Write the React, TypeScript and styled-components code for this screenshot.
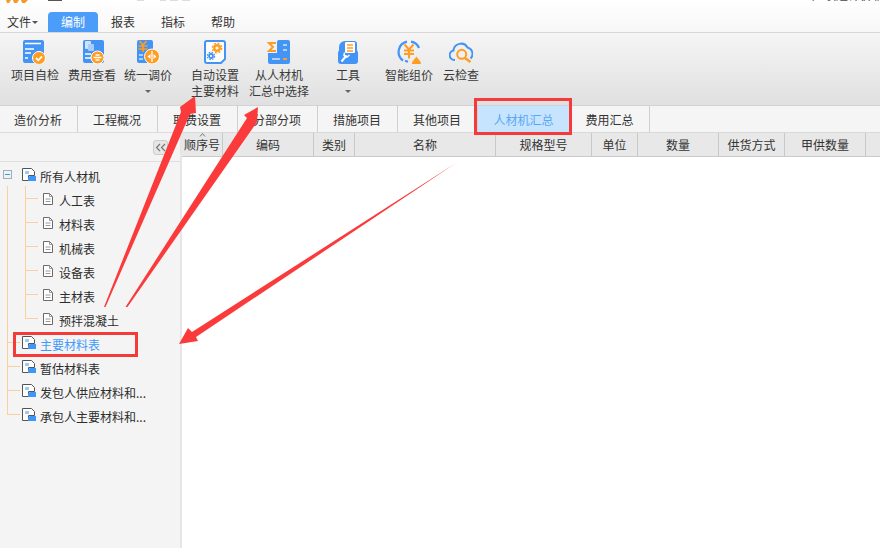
import { type FC, type ReactNode } from 'react';
import styled, { createGlobalStyle } from 'styled-components';

const GlobalStyle = createGlobalStyle`
  html, body {
    margin: 0;
    padding: 0;
    background: #fff;
  }
  body {
    font-family: "Noto Sans CJK SC", "Liberation Sans", sans-serif;
    font-size: 12px;
    color: #333;
  }
`;

const Page = styled.div`
  position: relative;
  width: 880px;
  height: 548px;
  overflow: hidden;
  display: flex;
  flex-direction: column;
`;

const TopBar = styled.div`
  height: 32px;
  flex: none;
  display: flex;
  flex-direction: column;
  background: linear-gradient(#fff, #f7f7f7);
  border-bottom: 1px solid #d6d6d6;
`;

const TitleStrip = styled.div`
  height: 12px;
  flex: none;
  display: flex;
  align-items: flex-start;
  overflow: hidden;
`;

const TitleText = styled.span`
  margin: -14px 0 0 auto;
  width: 68px;
  white-space: nowrap;
  overflow: hidden;
  line-height: 18px;
  color: #444;
`;

const Menu = styled.div`
  display: flex;
  height: 20px;
`;

const MenuItem = styled.div<{ $active?: boolean; $first?: boolean }>`
  width: ${({ $first }) => ($first ? '48px' : '50px')};
  padding-left: ${({ $first }) => ($first ? '7px' : '0')};
  box-sizing: border-box;
  display: flex;
  align-items: center;
  justify-content: ${({ $first }) => ($first ? 'flex-start' : 'center')};
  line-height: 20px;
  border-radius: 4px 4px 0 0;
  color: ${({ $active }) => ($active ? '#fff' : '#333')};
  background: ${({ $active }) => ($active ? '#4b9df9' : 'transparent')};
`;

const Caret = styled.span`
  display: inline-block;
  margin-left: 1px;
  margin-top: 1px;
  border-left: 3px solid transparent;
  border-right: 3px solid transparent;
  border-top: 3px solid #555;
`;

const Ribbon = styled.div`
  height: 72px;
  flex: none;
  display: flex;
  padding-left: 7px;
  background: linear-gradient(#f5f5f5, #e0e0e0);
  border-bottom: 1px solid #d2d2d2;
`;

const RibbonItem = styled.div<{ $width: number }>`
  width: ${({ $width }) => $width}px;
  flex: none;
  display: flex;
  flex-direction: column;
  align-items: center;
  padding-top: 7px;
  line-height: 16px;
  white-space: nowrap;
  color: #3a3a3a;
`;

const RibbonLabel = styled.span`
  margin-top: 3px;
  display: flex;
  flex-direction: column;
  align-items: center;
`;

const RibbonCaret = styled.span`
  margin-top: 7px;
  border-left: 3px solid transparent;
  border-right: 3px solid transparent;
  border-top: 3px solid #666;
`;

const TabBar = styled.div`
  height: 26px;
  flex: none;
  display: flex;
  background: #f5f5f5;
  border-bottom: 1px solid #dcdcdc;
`;

const Tab = styled.div<{ $width: number; $active?: boolean }>`
  width: ${({ $width }) => $width}px;
  flex: none;
  box-sizing: border-box;
  display: flex;
  align-items: center;
  justify-content: center;
  padding-right: 1px;
  border-right: 1px solid #cfcfcf;
  color: ${({ $active }) => ($active ? '#5aa8f5' : '#333')};
  background: ${({ $active }) => ($active ? '#c6e4fd' : 'transparent')};
`;

const Workspace = styled.div`
  flex: 1;
  display: flex;
  min-height: 0;
`;

const Sidebar = styled.div`
  width: 180px;
  flex: none;
  background: #f4f4f4;
  border-right: 2px solid #e6e6e6;
`;

const SidebarHead = styled.div`
  height: 29px;
  box-sizing: border-box;
  display: flex;
  align-items: flex-start;
  justify-content: flex-end;
  padding: 7px 12px 0 0;
  border-bottom: 1px solid #dedede;
`;

const CollapseButton = styled.div`
  width: 15px;
  height: 15px;
  box-sizing: border-box;
  display: flex;
  align-items: center;
  justify-content: center;
  border: 1px solid #cdcdcd;
  border-radius: 3px;
  background: #e6e6e6;
`;

const TreeRoot = styled.div`
  position: relative;
  padding-top: 2px;
  &::before {
    content: '';
    position: absolute;
    left: 7px;
    top: 24px;
    height: 229px;
    border-left: 1px solid #f9d19b;
  }
`;

const LeafGroup = styled.div`
  position: relative;
  &::before {
    content: '';
    position: absolute;
    left: 25px;
    top: -2px;
    bottom: 14px;
    border-left: 1px solid #f9d19b;
  }
`;

const TreeRow = styled.div<{ $leaf?: boolean; $selected?: boolean; $connector?: boolean }>`
  position: relative;
  height: 24px;
  display: flex;
  align-items: center;
  gap: ${({ $leaf }) => ($leaf ? '6px' : '4px')};
  padding-left: ${({ $leaf }) => ($leaf ? '43px' : '22px')};
  white-space: nowrap;
  color: ${({ $selected }) => ($selected ? '#3f9bfa' : '#2c2c2c')};
  &::before {
    content: '';
    display: ${({ $connector }) => ($connector ? 'block' : 'none')};
    position: absolute;
    left: ${({ $leaf }) => ($leaf ? '25px' : '7px')};
    top: 10px;
    width: 13px;
    border-top: 1px solid #f9d19b;
  }
`;

const Expander = styled.span`
  position: absolute;
  left: 3px;
  top: 6px;
  width: 9px;
  height: 9px;
  box-sizing: border-box;
  border: 1px solid #9fb0bd;
  background: #eef2f5;
  display: flex;
  align-items: center;
  justify-content: center;
  &::after {
    content: '';
    width: 5px;
    border-top: 1px solid #3f9bc8;
  }
`;

const TreeIcon = styled.svg`
  flex: none;
  margin-top: -3px;
`;

const Main = styled.div`
  flex: 1;
  min-width: 0;
  background: #fff;
`;

const GridHead = styled.div`
  height: 23px;
  display: flex;
  background: #e8e8e8;
  border-top: 1px solid #d9d9d9;
  margin-top: -1px;
  border-bottom: 1px solid #cacaca;
`;

const GridCell = styled.div<{ $width: number; $open?: boolean }>`
  position: relative;
  width: ${({ $width }) => $width}px;
  flex: none;
  box-sizing: border-box;
  display: flex;
  align-items: center;
  justify-content: center;
  border-right: ${({ $open }) => ($open ? 'none' : '1px solid #c8c8c8')};
  color: #333;
  white-space: nowrap;
`;

const SortMark = styled.svg`
  position: absolute;
  left: 17px;
  top: 0;
`;

const Annotations = styled.svg`
  position: absolute;
  inset: 0;
  pointer-events: none;
`;

const BLUE = '#4394f5';
const ORANGE = '#ff9d22';

const IconSvg: FC<{ children: ReactNode }> = ({ children }) => (
  <svg width="24" height="24" viewBox="0 0 24 24">{children}</svg>
);

const CheckIcon = () => (
  <IconSvg>
    <rect x="0" y="0" width="21" height="23" rx="2" fill={BLUE} />
    <path d="M2 3.500h16M2 9h9M2 13h6M2 18h3" stroke="#fff" strokeWidth="1.500" />
    <circle cx="16" cy="18" r="6.500" fill={ORANGE} stroke="#fff" />
    <path d="M13 18l2.300 2.300 3.700-4" stroke="#fff" strokeWidth="1.800" fill="none" />
  </IconSvg>
);

const CostIcon = () => (
  <IconSvg>
    <rect x="3" y="0" width="21" height="23" rx="2" fill={BLUE} />
    <rect x="5" y="1" width="6" height="8" rx="1" fill="#cfe3fb" />
    <rect x="8" y="4" width="6" height="7" rx="1" fill="#a7cdf8" />
    <path d="M5 14h6M5 18h6" stroke="#fff" strokeWidth="1.500" />
    <circle cx="17.500" cy="17.500" r="6.500" fill={ORANGE} stroke="#fff" />
    <path d="M13.500 17.500h8M15.500 15h4M15.500 20h4" stroke="#fff" strokeWidth="1.300" />
  </IconSvg>
);

const PriceIcon = () => (
  <IconSvg>
    <rect x="1" y="0" width="16" height="23" rx="2" fill={BLUE} />
    <path d="M3.500 1l3.500 4 3.500-4M2.500 6h9M2.500 9h9M7 5v7" stroke={ORANGE} strokeWidth="1.700" fill="none" />
    <path d="M3 15h4M3 19h4" stroke="#cfe3fb" strokeWidth="1.500" />
    <circle cx="16" cy="16.500" r="7.500" fill={ORANGE} stroke="#fff" />
    <path d="M16 11v11" stroke="#fff" strokeWidth="1.300" />
    <path d="M14.500 14l-3 2.500 3 2.500zM17.500 14l3 2.500-3 2.500z" fill="#fff" />
  </IconSvg>
);

const GearIcon = () => (
  <IconSvg>
    <path d="M4 1h16a2 2 0 0 1 2 2v16l-4 4H4a2 2 0 0 1-2-2V3a2 2 0 0 1 2-2z" fill="#fff" stroke={BLUE} strokeWidth="2" />
    <circle cx="14" cy="8" r="2.800" fill="none" stroke={ORANGE} strokeWidth="2.400" />
    <circle cx="14" cy="8" r="4.800" fill="none" stroke={ORANGE} strokeWidth="1.300" strokeDasharray="2 1.770" />
    <circle cx="8" cy="16" r="2" fill="none" stroke={BLUE} strokeWidth="1.800" />
    <circle cx="8" cy="16" r="3.700" fill="none" stroke={BLUE} strokeWidth="1.100" strokeDasharray="1.700 1.200" />
  </IconSvg>
);

const SumIcon = () => (
  <IconSvg>
    <path d="M10 2a2 2 0 0 1 2-2h9a2 2 0 0 1 2 2v20a2 2 0 0 1-2 2H3a2 2 0 0 1-2-2v-9h9z" fill={BLUE} />
    <path d="M9 3H2l4 4-4 4h7" stroke={ORANGE} strokeWidth="2" fill="none" />
    <path d="M16 5h4M16 10h4" stroke="#cfe3fb" strokeWidth="1.500" />
    <path d="M5 19h8" stroke="#cfe3fb" strokeWidth="1.500" />
    <path d="M16 19h4" stroke={ORANGE} strokeWidth="2" />
  </IconSvg>
);

const ToolIcon = () => (
  <IconSvg>
    <rect x="2" y="10" width="20" height="14" rx="3" fill={BLUE} />
    <path d="M3 14V7a6 6 0 0 1 6-6h9a3 3 0 0 1 3 3v8H9z" fill={BLUE} />
    <rect x="9" y="2" width="10" height="11" rx="1" fill="#fff" />
    <path d="M11 5h6M11 8h6M11 11h6" stroke={ORANGE} strokeWidth="1.400" />
    <path d="M5.500 21.500l5-6" stroke="#fff" strokeWidth="2" fill="none" />
    <path d="M8.500 12.500l-.5 3 3 1.500 2.500-2" stroke="#fff" strokeWidth="1.500" fill="none" />
  </IconSvg>
);

const SmartPriceIcon = () => (
  <IconSvg>
    <path d="M6 20.500A10.500 10.500 0 0 1 10 1.700" fill="none" stroke={BLUE} strokeWidth="2.200" />
    <path d="M14 1.700a10.500 10.500 0 0 1 8 6.300" fill="none" stroke={BLUE} strokeWidth="2.200" />
    <path d="M8 20.800l3 1" fill="none" stroke={BLUE} strokeWidth="2.200" />
    <path d="M7.500 4.500l4.500 5 4.500-5M7 10.500h10M7 14h10M12 9.500v9" stroke={ORANGE} strokeWidth="2" fill="none" />
    <path d="M15 24c0-3 2-4 4.500-7.500 2 3.500 4.500 4.500 4.500 7.500z" fill={ORANGE} />
  </IconSvg>
);

const CloudIcon = () => (
  <IconSvg>
    <path d="M6 20H5.500a4.800 4.800 0 0 1-1-9.500A7.500 7.500 0 0 1 18.500 7.500a6.500 6.500 0 0 1 3 11" fill="none" stroke={BLUE} strokeWidth="2" />
    <circle cx="12.700" cy="14.300" r="4.500" fill="#f0f0f0" stroke={ORANGE} strokeWidth="2" />
    <path d="M16 18l5.500 4" stroke={ORANGE} strokeWidth="2.500" />
  </IconSvg>
);

const FolderIcon = () => (
  <TreeIcon width="14" height="14" viewBox="0 0 14 14">
    <path d="M.5.500h9l3 3v4H6.500v5h-6z" fill="#fff" stroke="#555" />
    <rect x="3" y="3" width="4" height="3" fill="#9ccafb" />
    <path d="M6 13V9.500L8 8h6v5z" fill="#3f96f8" />
  </TreeIcon>
);

const DocIcon = () => (
  <TreeIcon width="10" height="12" viewBox="0 0 10 12">
    <path d="M6.500.5H.5v11h9V3.500z" fill="#fff" stroke="#6b6b6b" />
    <path d="M6.500.5v3h3M2.500 6h5M2.500 8.500h5" fill="none" stroke="#9a9a9a" />
  </TreeIcon>
);

const ribbonItems: { width: number; icon: FC; label: string[]; caret?: boolean }[] = [
  { width: 56, icon: CheckIcon, label: ['项目自检'] },
  { width: 58, icon: CostIcon, label: ['费用查看'] },
  { width: 54, icon: PriceIcon, label: ['统一调价'], caret: true },
  { width: 80, icon: GearIcon, label: ['自动设置', '主要材料'] },
  { width: 48, icon: SumIcon, label: ['从人材机', '汇总中选择'] },
  { width: 90, icon: ToolIcon, label: ['工具'], caret: true },
  { width: 32, icon: SmartPriceIcon, label: ['智能组价'] },
  { width: 72, icon: CloudIcon, label: ['云检查'] },
];

const tabs = [
  { label: '造价分析', width: 78 },
  { label: '工程概况', width: 80 },
  { label: '取费设置', width: 80 },
  { label: '分部分项', width: 80 },
  { label: '措施项目', width: 80 },
  { label: '其他项目', width: 80 },
  { label: '人材机汇总', width: 93, active: true },
  { label: '费用汇总', width: 79 },
];

const columns = [
  { label: '顺序号', width: 41 },
  { label: '编码', width: 91 },
  { label: '类别', width: 41 },
  { label: '名称', width: 141 },
  { label: '规格型号', width: 96 },
  { label: '单位', width: 46 },
  { label: '数量', width: 81 },
  { label: '供货方式', width: 66 },
  { label: '甲供数量', width: 81 },
  { label: '', width: 14 },
];

const leaves = ['人工表', '材料表', '机械表', '设备表', '主材表', '预拌混凝土'];
const tables = ['主要材料表', '暂估材料表', '发包人供应材料和...', '承包人主要材料和...'];

const App: FC = () => (
  <>
    <GlobalStyle />
    <Page>
      <TopBar>
        <TitleStrip>
          <svg width="240" height="4" viewBox="0 0 240 4">
            <path d="M6 0h5l-2 3H7zM13 0h6l-2 3h-3zM21 0h7l-3 3h-3z" fill="#f59a23" />
            <path d="M48 .5h14" stroke="#555" />
            <path d="M137 .5h7M160 .5h6M170 .5h8M182 .5h8" stroke="#ddd" />
          </svg>
          <TitleText>广联达计价软件</TitleText>
        </TitleStrip>
        <Menu>
          <MenuItem $first>文件<Caret /></MenuItem>
          <MenuItem $active>编制</MenuItem>
          <MenuItem>报表</MenuItem>
          <MenuItem>指标</MenuItem>
          <MenuItem>帮助</MenuItem>
        </Menu>
      </TopBar>

      <Ribbon>
        {ribbonItems.map(({ width, icon: Icon, label, caret }) => (
          <RibbonItem key={label[0]} $width={width}>
            <Icon />
            <RibbonLabel>
              {label.map((line) => <span key={line}>{line}</span>)}
            </RibbonLabel>
            {caret && <RibbonCaret />}
          </RibbonItem>
        ))}
      </Ribbon>

      <TabBar>
        {tabs.map((tab) => (
          <Tab key={tab.label} $width={tab.width} $active={tab.active}>{tab.label}</Tab>
        ))}
      </TabBar>

      <Workspace>
        <Sidebar>
          <SidebarHead>
            <CollapseButton>
              <svg width="11" height="9" viewBox="0 0 11 9">
                <path d="M5 1L1.500 4.500 5 8M10 1L6.500 4.500 10 8" fill="none" stroke="#777" strokeWidth="1.200" />
              </svg>
            </CollapseButton>
          </SidebarHead>
          <TreeRoot>
            <TreeRow>
              <Expander />
              <FolderIcon />
              所有人材机
            </TreeRow>
            <LeafGroup>
              {leaves.map((leaf) => (
                <TreeRow key={leaf} $leaf $connector>
                  <DocIcon />
                  {leaf}
                </TreeRow>
              ))}
            </LeafGroup>
            {tables.map((table, i) => (
              <TreeRow key={table} $connector $selected={i === 0}>
                <FolderIcon />
                {table}
              </TreeRow>
            ))}
          </TreeRoot>
        </Sidebar>

        <Main>
          <GridHead>
            {columns.map((col, i) => (
              <GridCell key={col.label || i} $width={col.width} $open={!col.label}>
                {i === 0 && (
                  <SortMark width="7" height="4" viewBox="0 0 7 4">
                    <path d="M1 3.500l2.500-3 2.500 3" fill="none" stroke="#777" />
                  </SortMark>
                )}
                {col.label}
              </GridCell>
            ))}
          </GridHead>
        </Main>
      </Workspace>

      <Annotations width="880" height="548" viewBox="0 0 880 548">
        <rect x="475.500" y="99.500" width="95" height="34" fill="none" stroke="#f53a3a" strokeWidth="3" />
        <rect x="14.500" y="333.500" width="122" height="22" fill="none" stroke="#f53a3a" strokeWidth="3" />
        <path d="M104 307L181 112l-1-5 15-11 1 17-6 1L105.500 307z" fill="#fb3b3b" />
        <path d="M125.500 307L247 118l-3-3 14-8-1 15L127.500 307z" fill="#fb3b3b" />
        <path d="M456 163L192 332l-4-4-9 16 19-3-2-4z" fill="#fb3b3b" />
      </Annotations>
    </Page>
  </>
);

export default App;
